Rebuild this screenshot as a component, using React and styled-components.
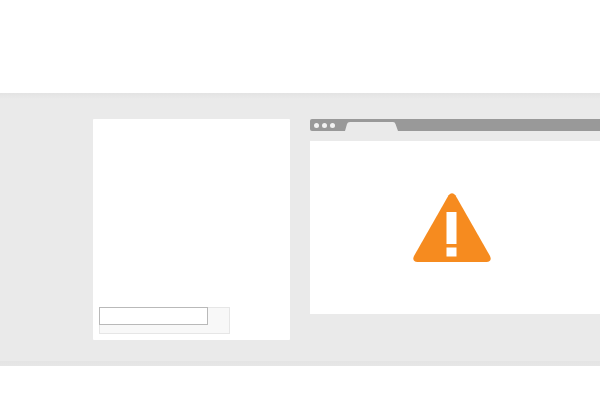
import React from 'react'
import styled, { createGlobalStyle } from 'styled-components'

const Global = createGlobalStyle`
  html, body {
    margin: 0;
    padding: 0;
    background: #fff;
    overflow: hidden;
    font-family: "Liberation Sans", sans-serif;
  }
`

const Page = styled.div`
  width: 600px;
  height: 400px;
  padding-top: 93px;
  box-sizing: border-box;
  overflow: hidden;
`

const Band = styled.div`
  height: 273px;
  box-sizing: border-box;
  padding: 26px 0 0 93px;
  display: flex;
  align-items: flex-start;
  gap: 20px;
  background: linear-gradient(#e3e3e3, #eaeaea 6px, #eaeaea 268px, #e4e4e4 268px, #e6e6e6);
`

const Card = styled.div`
  width: 197px;
  height: 221px;
  box-sizing: border-box;
  padding: 0 60px 6px 6px;
  display: flex;
  flex-direction: column;
  justify-content: flex-end;
  background: #fff;
  border-radius: 1px;
`

const Field = styled.div`
  height: 27px;
  box-sizing: border-box;
  padding-right: 21px;
  background: #f8f8f8;
  border: 1px solid #e6e6e6;
`

const FieldInput = styled.div`
  height: 18px;
  margin: -1px 0 0 -1px;
  box-sizing: border-box;
  background: #fff;
  border: 1px solid #b9b9b9;
`

const Browser = styled.div`
  flex: 1;
  min-width: 0;
  display: flex;
  flex-direction: column;
`

const TabBar = styled.div`
  height: 12px;
  display: flex;
  align-items: flex-end;
  background: #999;
  border-radius: 2px 0 0 2px;
`

const Dots = styled.div`
  width: 35px;
  height: 12px;
  box-sizing: border-box;
  padding-left: 4px;
  display: flex;
  align-items: center;
  gap: 3px;
`

const Dot = styled.span`
  width: 5px;
  height: 5px;
  border-radius: 50%;
  background: #f2f2f2;
`

const Tab = styled.svg`
  display: block;
  width: 53px;
  height: 9px;
`

const Gap = styled.div`
  height: 10px;
`

const Viewport = styled.div`
  height: 173px;
  box-sizing: border-box;
  padding: 0 6px 1px 0;
  display: flex;
  align-items: center;
  justify-content: center;
  background: #fff;
`

const Warning = styled.svg`
  display: block;
  width: 78px;
  height: 69px;
`

const App = () => {
  return (
    <Page>
      <Global />
      <Band>
        <Card>
          <Field>
            <FieldInput />
          </Field>
        </Card>
        <Browser>
          <TabBar>
            <Dots>
              <Dot />
              <Dot />
              <Dot />
            </Dots>
            <Tab viewBox="0 0 53 9">
              <path d="M0 9 L2 2 Q2.5 0 5 0 L48 0 Q50 0 50.5 2 L53 9 Z" fill="#eaeaea" />
            </Tab>
          </TabBar>
          <Gap />
          <Viewport>
            <Warning viewBox="0 0 78 69">
              <path
                d="M35.6 2.2 Q39 -1.6 42.4 2.2 L77 63 Q79.4 68.6 73.5 69 L4.5 69 Q-1.4 68.6 1 63 Z"
                fill="#f68b1f"
              />
              <rect x="33.5" y="19" width="10" height="32" fill="#fff" />
              <rect x="33.5" y="54.5" width="10" height="9" fill="#fff" />
            </Warning>
          </Viewport>
        </Browser>
      </Band>
    </Page>
  )
}

export default App
